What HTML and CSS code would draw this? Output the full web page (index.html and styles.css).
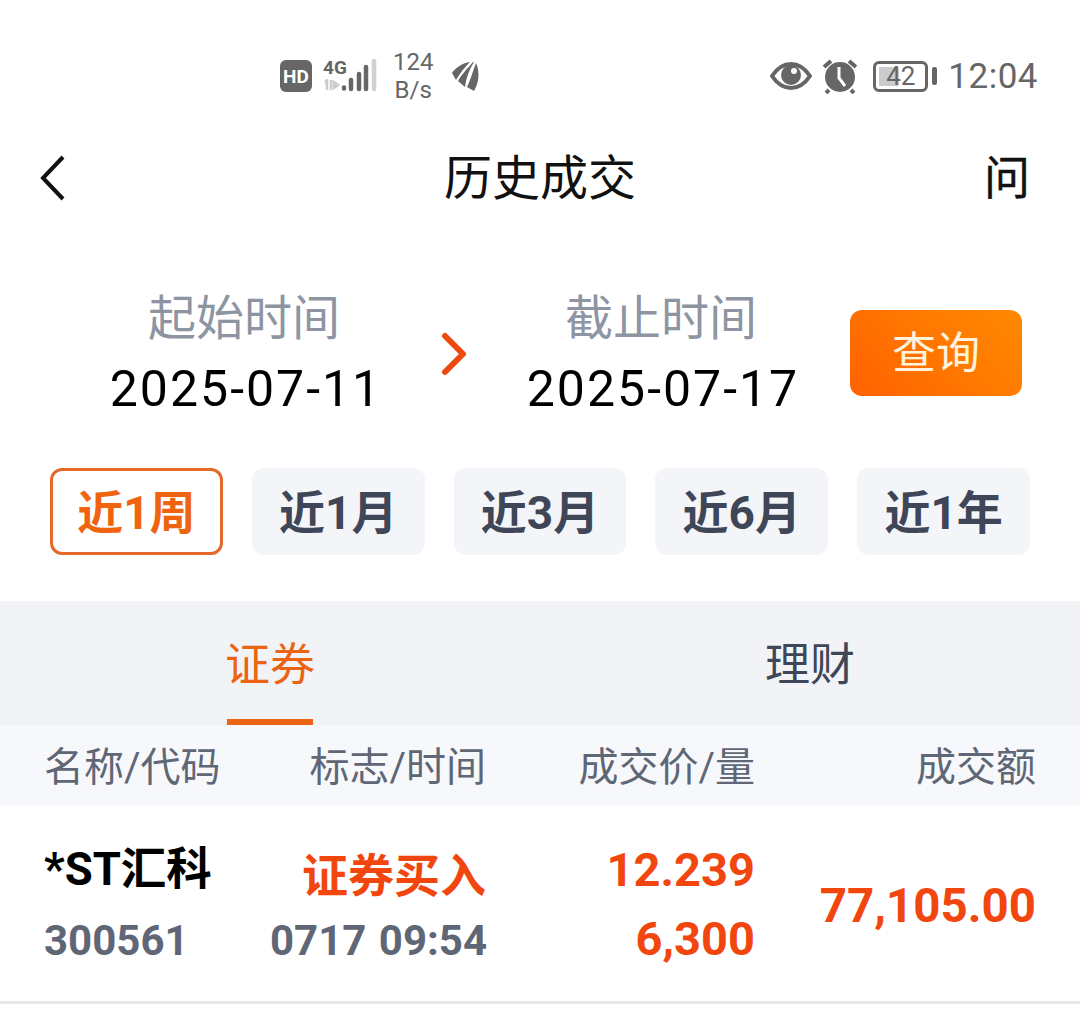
FILE: index.html
```html
<!DOCTYPE html>
<html lang="zh-CN">
<head>
<meta charset="utf-8">
<title>历史成交</title>
<link rel="stylesheet" href="styles.css">
</head>
<body>
<div class="page">
  <div class="status">
    <div class="status-left">
      <svg class="ic-hd" width="32" height="34" viewBox="0 0 32 34"><rect width="32" height="32" y="1" rx="6" fill="#666"/><text x="16" y="24" text-anchor="middle" class="hd-text">HD</text></svg>
      <div class="sig">
        <div class="sig-labels"><span class="sig-4g">4G</span><svg width="18" height="12" viewBox="0 0 18 12"><path d="M2 3l2-2v10M8 1v10M11 3l4 3-4 3z" stroke="#ccc" stroke-width="2.5" fill="#ccc"/></svg></div>
        <svg class="sig-bars" width="36" height="34" viewBox="0 0 36 34"><g stroke-width="4.5" stroke-linecap="round"><path d="M3 29.5v-1M10 30V21M18 30V15M25 30V8" stroke="#666"/><path d="M33 30V2" stroke="#d0d0d0"/></g></svg>
      </div>
      <div class="speed"><span>124</span><span>B/s</span></div>
      <svg class="ic-leaf" width="28" height="30" viewBox="0 0 28 30"><g fill="#666"><path d="M18 1C11 2 4 6 0 12l4 7C8 12 13 6 18 1z"/><path d="M21 1C16 7 9 14 6 20l7 6C14 17 17 9 22 1z"/><path d="M24 2C21 10 18 20 15 26l7 4C27 22 28 11 24 2z"/></g></svg>
    </div>
    <div class="status-right">
      <svg width="42" height="30" viewBox="0 0 42 30"><path d="M2 15C8 6 14 3 21 3s13 3 19 12c-6 9-12 12-19 12S8 24 2 15z" fill="none" stroke="#666" stroke-width="4"/><circle cx="21" cy="14" r="10" fill="#666"/><circle cx="24" cy="10" r="3" fill="#fff"/></svg>
      <svg class="ic-alarm" width="36" height="36" viewBox="0 0 36 36"><circle cx="18" cy="19" r="15" fill="#666"/><path d="M17 9v11l6 8" stroke="#fff" stroke-width="3" fill="none"/><path d="M2 9l7-6M34 9l-7-6M7 32l-3 3M29 32l3 3" stroke="#666" stroke-width="4"/></svg>
      <div class="battery"><div class="batt-body"><span class="batt-fill"></span><span class="batt-num">42</span></div><span class="batt-tip"></span></div>
      <span class="clock">12:04</span>
    </div>
  </div>

  <header class="nav">
    <svg class="nav-back" width="26" height="46" viewBox="0 0 26 46"><path d="M23 2L3 23l20 21" fill="none" stroke="#111" stroke-width="4"/></svg>
    <h1 class="title">历史成交</h1>
    <span class="ask">问</span>
  </header>

  <section class="range">
    <div class="date-block"><div class="date-label">起始时间</div><div class="date-value">2025-07-11</div></div>
    <svg class="range-arrow" width="26" height="44" viewBox="0 0 26 44"><path d="M4 4l18 18L4 40" fill="none" stroke="#ee4a10" stroke-width="6" stroke-linecap="round" stroke-linejoin="round"/></svg>
    <div class="date-block"><div class="date-label">截止时间</div><div class="date-value">2025-07-17</div></div>
    <button class="query">查询</button>
  </section>

  <div class="chips">
    <div class="chip chip-on">近1周</div>
    <div class="chip">近1月</div>
    <div class="chip">近3月</div>
    <div class="chip">近6月</div>
    <div class="chip">近1年</div>
  </div>

  <div class="tabs">
    <div class="tab tab-on">证券</div>
    <div class="tab">理财</div>
  </div>

  <div class="grid-row thead">
    <div>名称/代码</div>
    <div class="r">标志/时间</div>
    <div class="r">成交价/量</div>
    <div class="r">成交额</div>
  </div>

  <div class="grid-row trow">
    <div class="cell-stack stack-name">
      <div class="stock-name">*ST汇科</div>
      <div class="sub">300561</div>
    </div>
    <div class="cell-stack stack-flag r">
      <div class="flag">证券买入</div>
      <div class="sub">0717 09:54</div>
    </div>
    <div class="cell-stack stack-num r">
      <div class="num">12.239</div>
      <div class="num">6,300</div>
    </div>
    <div class="r num amount">77,105.00</div>
  </div>
</div>
</body>
</html>
```

FILE: styles.css
```css
* { box-sizing: border-box; }
html, body { margin: 0; background: #fff; }
body { font-family: Roboto, "Noto Sans CJK SC", sans-serif; }
.page { width: 1080px; height: 1020px; overflow: hidden; display: flex; flex-direction: column; }

.status { height: 124px; display: flex; justify-content: space-between; align-items: center; padding: 28px 42px 0 280px; color: #666; }
.status-left, .status-right { display: flex; align-items: center; }
.hd-text { font: 700 19px Roboto, sans-serif; fill: #fff; }
.sig { display: flex; align-items: flex-end; margin-left: 11px; }
.sig-labels { display: flex; flex-direction: column; width: 18px; height: 34px; justify-content: space-between; padding-bottom: 2px; }
.sig-4g { font: 700 19px/18px "Liberation Sans Narrow", Roboto, sans-serif; color: #666; }
.speed { display: flex; flex-direction: column; align-items: center; margin-left: 16px; font-size: 24px; line-height: 28px; color: #666; }
.ic-leaf { margin-left: 19px; }
.status-right svg { flex: none; }
.ic-alarm { margin-left: 10px; }
.battery { display: flex; align-items: center; margin-left: 15px; }
.batt-body { position: relative; width: 55px; height: 31px; border: 3px solid #666; border-radius: 6px; display: flex; align-items: center; justify-content: center; }
.batt-fill { position: absolute; left: 3px; top: 3px; bottom: 3px; width: 20px; background: #ccc; }
.batt-num { position: relative; font-size: 26px; line-height: 25px; color: #666; }
.batt-tip { width: 5px; height: 18px; background: #666; border-radius: 2px; margin-left: 4px; }
.clock { font-size: 35px; margin-left: 11px; color: #666; letter-spacing: 0.5px; }

.nav { height: 108px; display: grid; grid-template-columns: 1fr auto 1fr; align-items: center; padding: 0 50px; }
.nav-back { margin-left: -10px; }
.title { margin: 0; padding-top: 1px; font-size: 48px; line-height: 70px; font-weight: 400; color: #111; }
.ask { justify-self: end; font-size: 46px; line-height: 1; color: #111; -webkit-text-stroke: 0.4px #111; }

.range { height: 236px; padding: 7px 0 0 94px; display: flex; align-items: center; }
.date-block { flex: none; width: 300px; text-align: center; }
.date-label { font-size: 48px; line-height: 70px; color: #8d94a2; }
.date-value { padding-left: 4px; font-size: 50px; line-height: 70px; letter-spacing: 2px; color: #000; }
.range-arrow { flex: none; margin: 0 44px 0 47px; }
.query { flex: none; margin: 0 0 2px 39px; width: 172px; height: 86px; border: 0; border-radius: 12px; background: linear-gradient(45deg, #ff6200, #ff8a00); color: #fff3dc; font: 400 44px "Noto Sans CJK SC", sans-serif; padding: 0 0 5px; }

.chips { display: grid; grid-template-columns: repeat(5, 1fr); gap: 29px; padding: 0 50px; height: 87px; }
.chip { display: flex; align-items: center; justify-content: center; padding-bottom: 5px; background: #f4f5f9; border-radius: 12px; font-size: 46px; font-weight: 700; color: #3e4657; }
.chip-on { background: #fff; border: 3px solid #e4692a; color: #f0640f; }

.tabs { margin-top: 46px; height: 124px; background: #f2f3f7; display: grid; grid-template-columns: 1fr 1fr; }
.tab { position: relative; display: flex; align-items: center; justify-content: center; padding-bottom: 4px; font-size: 45px; color: #3e4657; }
.tab-on { color: #ea6413; }
.tab-on::after { content: ""; position: absolute; left: 50%; bottom: 0; width: 86px; height: 6px; margin-left: -43px; background: #ea6413; }

.grid-row { display: grid; grid-template-columns: 226px 216px 269px 281px; padding: 0 44px; }
.r { text-align: right; }
.thead { height: 80px; padding-bottom: 3px; background: #f7f8fb; align-items: center; font-size: 40px; color: #5f6675; white-space: nowrap; }
.trow { height: 199px; align-items: center; border-bottom: 3px solid #e5e7eb; }
.cell-stack { display: flex; flex-direction: column; }
.stack-name { gap: 11px; padding-top: 4px; }
.stack-flag { gap: 5px; padding-top: 11px; }
.stack-flag .sub { word-spacing: 2px; }
.stack-num { gap: 9px; padding-top: 3px; }
.stock-name { font-size: 45.5px; line-height: 60px; font-weight: 700; color: #000; white-space: nowrap; }
.sub { font-size: 42px; line-height: 60px; font-weight: 700; color: #5f6675; white-space: nowrap; }
.flag { font-size: 46px; line-height: 60px; font-weight: 700; color: #f2460f; white-space: nowrap; }
.num { font-size: 47px; line-height: 60px; font-weight: 700; color: #f2460f; }
.amount { font-size: 47.5px; padding-top: 6px; }
```
